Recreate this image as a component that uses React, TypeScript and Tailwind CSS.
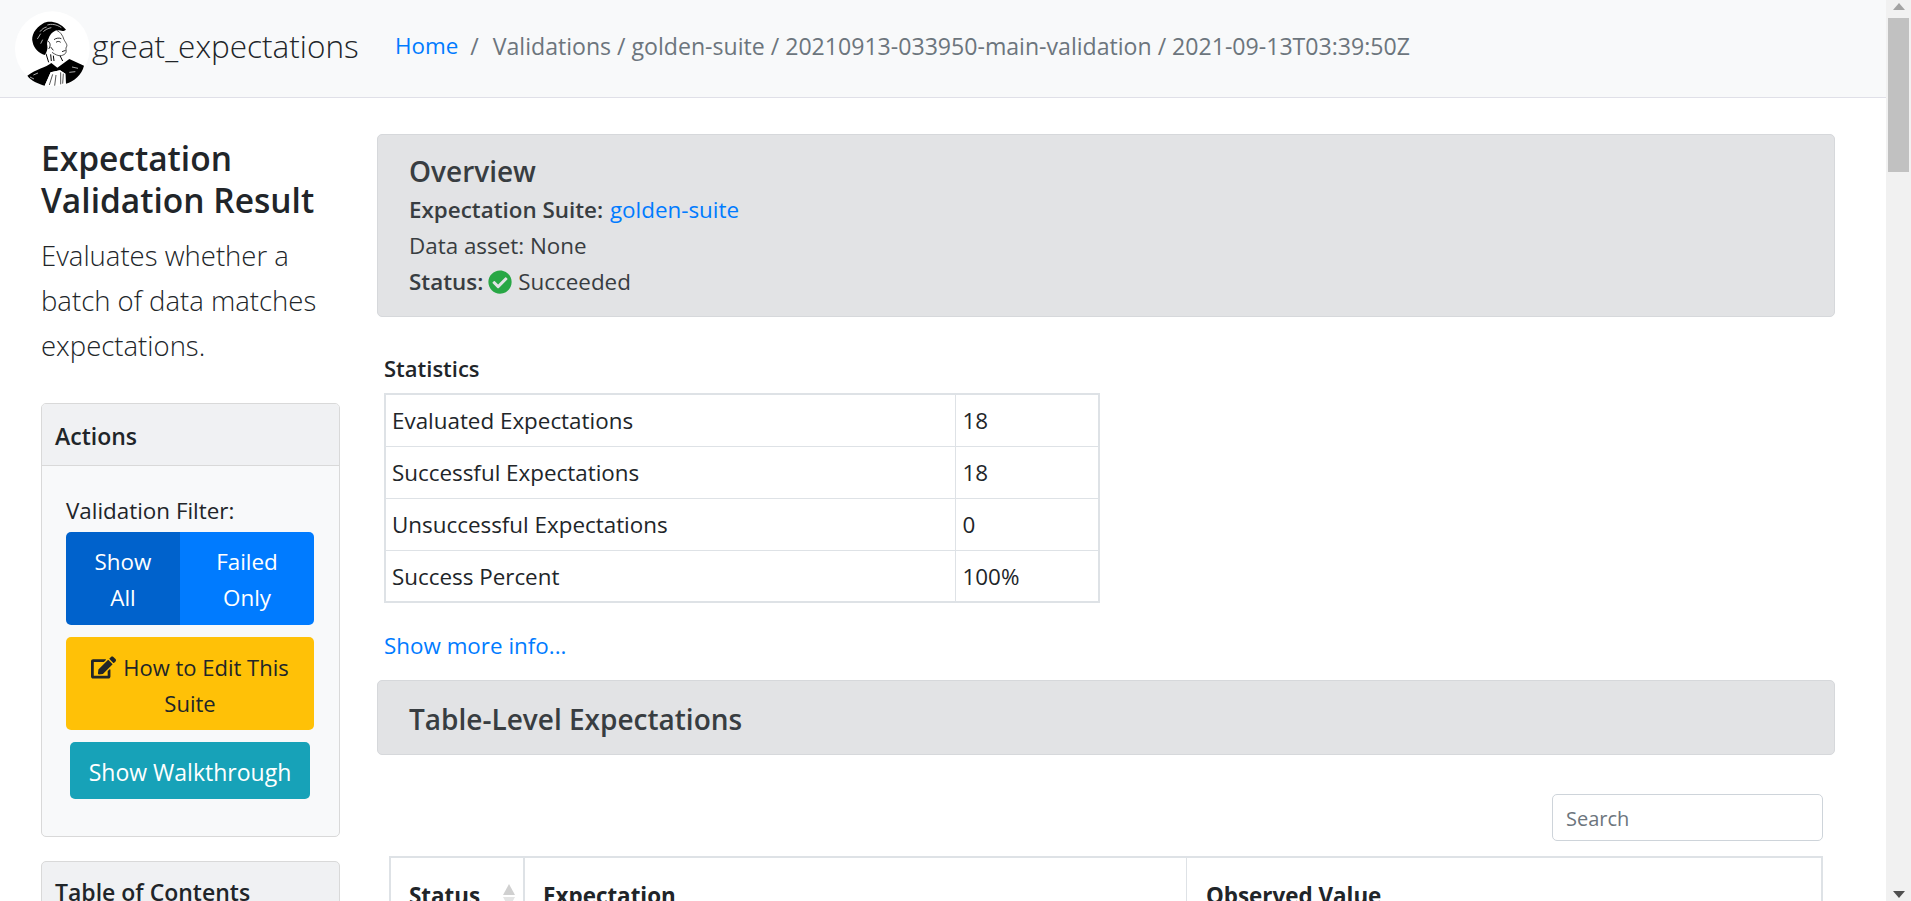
import { FaCheckCircle, FaEdit } from "react-icons/fa";

const font = "font-['Open_Sans',sans-serif]";

function Portrait() {
  return (
    <svg viewBox="15 22 225 225" className="w-[75px] h-[75px]">
      <circle cx="127" cy="135" r="112" fill="#fff" />
      {/* hair */}
      <path d="M98 60C114 50 146 52 168 78C158 86 150 78 140 80C128 84 122 90 116 104C112 112 110 120 112 126C114 134 110 146 104 154C88 150 72 136 68 116C62 96 76 72 98 60Z" fill="#000" />
      <path d="M112 64C124 60 140 62 154 72M90 84C96 76 102 72 110 70M82 106L92 90M100 84C106 78 114 74 124 72M92 120L98 108" fill="none" stroke="#fff" strokeWidth="2" />
      {/* face */}
      <path d="M140 80C150 84 158 94 162 108C166 116 174 124 169 130C166 134 170 140 168 146C166 152 160 154 154 156C146 158 134 152 126 146" fill="none" stroke="#000" strokeWidth="2" />
      <path d="M132 108C138 103 148 102 154 105M138 116C142 112 149 113 152 116M156 144L167 140M114 112C122 118 122 128 116 136M122 130L130 140" fill="none" stroke="#000" strokeWidth="2.5" />
      <path d="M108 150L116 176M150 156L158 172M122 152L124 172M130 156L132 172" fill="none" stroke="#000" strokeWidth="3" />
      {/* jacket */}
      <path d="M52 216C78 196 108 192 124 178L142 192L178 166L222 186C216 212 192 234 168 240L166 210L150 200L122 206L104 246C84 240 64 232 52 216Z" fill="#000" />
      <path d="M122 206L104 246L150 247L166 241L166 210L150 200Z" fill="#fff" />
      <path d="M128 212L118 244M138 214L134 246M152 206L152 242M160 210L158 240" fill="none" stroke="#000" strokeWidth="2" />
      <path d="M70 214L84 208M186 190L204 194M178 206L196 204M60 220L72 226" fill="none" stroke="#fff" strokeWidth="2" />
    </svg>
  );
}

function SortArrows() {
  return (
    <svg viewBox="0 0 14 24" className="w-[14px] h-[24px]">
      <path d="M7 0L13 11H1Z" fill="#d0d0d0" />
      <path d="M7 24L13 13H1Z" fill="#e4e4e4" />
    </svg>
  );
}

function Scrollbar() {
  return (
    <div className="w-[25px] h-[901px] bg-[#f1f1f1] flex flex-col items-center shrink-0">
      <svg viewBox="0 0 12 7" className="w-[12px] h-[7px] mt-[3px]">
        <path d="M6 0L12 7H0Z" fill="#a3a3a3" />
      </svg>
      <div className="w-[21px] h-[154px] mt-[8px] bg-[#c1c1c1]" />
      <div className="flex-1" />
      <svg viewBox="0 0 12 7" className="w-[12px] h-[7px] mb-[3px]">
        <path d="M6 7L12 0H0Z" fill="#505050" />
      </svg>
    </div>
  );
}

const stats = [
  ["Evaluated Expectations", "18"],
  ["Successful Expectations", "18"],
  ["Unsuccessful Expectations", "0"],
  ["Success Percent", "100%"],
];

export default function App() {
  return (
    <div className={`${font} flex h-[901px] overflow-hidden bg-white text-[22.4px] leading-[36px] text-[#212529]`}>
      <div className="w-[1886px] shrink-0">
        {/* Navbar */}
        <nav className="h-[98px] bg-[#f8f9fa] border-b border-[#e0e0e8] flex items-center pl-[15px]">
          <Portrait />
          <span className="ml-[2px] mb-[6px] text-[31.5px] font-light text-[#212529] w-[303px]">great_expectations</span>
          <div className="text-[#6c757d] text-[23.1px] flex gap-[12px] mb-[6px]">
            <a className="text-[#007bff] text-[22.4px]">Home</a>
            <span>/</span>
            <span className="ml-[2px]">Validations / golden-suite / 20210913-033950-main-validation / 2021-09-13T03:39:50Z</span>
          </div>
        </nav>

        <div className="flex">
          {/* Sidebar */}
          <aside className="w-[299px] ml-[41px] pt-[39px] shrink-0">
            <h1 className="text-[33.5px] leading-[42px] font-semibold">Expectation Validation Result</h1>
            <p className="mt-[12px] text-[27.5px] leading-[45px] font-light">Evaluates whether a batch of data matches expectations.</p>

            <div className="mt-[35px] h-[434px] border border-[#d9d9d9] rounded-[5px] bg-[#f8f9fa] overflow-hidden">
              <div className="h-[62px] bg-[#f0f1f3] border-b border-[#d9d9d9] px-[13px] pt-[2px] flex items-center font-semibold text-[23px]">Actions</div>
              <div className="pl-[24px] pr-[25px] pt-[27px] text-center">
                <div className="text-left leading-[36px] mb-[3px]">Validation Filter:</div>
                <div className="flex rounded-[5px] overflow-hidden text-white h-[93px]">
                  <div className="w-[114px] bg-[#0062cc] flex items-center justify-center px-[20px] pt-[2px]">Show All</div>
                  <div className="flex-1 bg-[#007bff] flex items-center justify-center px-[30px] pt-[2px]">Failed Only</div>
                </div>
                <div className="mt-[12px] h-[93px] rounded-[5px] bg-[#ffc107] flex items-center justify-center px-[8px] pt-[2px] text-[22px]">
                  <span>
                    <FaEdit className="inline w-[25px] h-[23px] mb-[4px] mr-[7px]" />
                    How to Edit This Suite
                  </span>
                </div>
                <div className="mt-[12px] mx-[4px] h-[57px] rounded-[5px] bg-[#17a2b8] text-white flex items-center justify-center whitespace-nowrap text-[23px] pt-[3px]">Show Walkthrough</div>
              </div>
            </div>

            <div className="mt-[24px] h-[70px] border border-[#d9d9d9] rounded-[5px] bg-[#f0f1f3] px-[13px] pt-[12px] font-semibold text-[23px]">Table of Contents</div>
          </aside>

          {/* Main */}
          <main className="ml-[37px] w-[1458px] pt-[36px]">
            <div className="h-[183px] border border-[#d6d8db] rounded-[5px] bg-[#e2e3e5] text-[#383d41] pl-[31px] pt-[16px]">
              <h2 className="text-[28px] leading-[41px] font-semibold">Overview</h2>
              <div><span className="font-semibold">Expectation Suite:</span> <a className="text-[#007bff] ml-[1px]">golden-suite</a></div>
              <div>Data asset: None</div>
              <div className="flex items-center">
                <span className="font-semibold">Status:</span>
                <FaCheckCircle className="w-[24px] h-[24px] ml-[5px] mr-[6px] text-[#28a745]" />
                Succeeded
              </div>
            </div>

            <div className="ml-[7px] mt-[33px] font-semibold text-[22px]">Statistics</div>
            <table className="ml-[7px] mt-[7px] w-[716px] table-fixed border-collapse border-2 border-[#dee2e6]">
              <tbody>
                {stats.map(([label, value]) => (
                  <tr key={label} className="h-[52px]">
                    <td className="w-[570px] border border-[#dee2e6] px-[6px] pt-[2px] pb-0">{label}</td>
                    <td className="border border-[#dee2e6] px-[7px] pt-[2px] pb-0">{value}</td>
                  </tr>
                ))}
              </tbody>
            </table>

            <div className="ml-[7px] mt-[25px]"><a className="text-[#007bff]">Show more info...</a></div>

            <div className="mt-[16px] h-[75px] border border-[#d6d8db] rounded-[5px] bg-[#e2e3e5] text-[#383d41] pl-[31px] pt-[2px] flex items-center">
              <h2 className="text-[28px] font-semibold">Table-Level Expectations</h2>
            </div>

            <div className="mt-[39px] flex justify-end mr-[12px]">
              <input placeholder="Search" className="w-[271px] h-[47px] border border-[#ced4da] rounded-[5px] px-[13px] pt-[2px] text-[20px] placeholder:text-[#6c757d] outline-none" />
            </div>

            <div className="mt-[15px] ml-[12px] mr-[12px] h-[80px] border-2 border-[#dee2e6] border-b-0 flex font-bold">
              <div className="w-[134px] border-r-2 border-[#dee2e6] pl-[18px] pr-[7px] pt-[20px] flex justify-between">
                <span>Status</span>
                <div className="pt-[6px]"><SortArrows /></div>
              </div>
              <div className="w-[662px] border-r border-[#dee2e6] pl-[18px] pt-[20px]">Expectation</div>
              <div className="flex-1 pl-[19px] pt-[20px]">Observed Value</div>
            </div>
          </main>
        </div>
      </div>
      <Scrollbar />
    </div>
  );
}
